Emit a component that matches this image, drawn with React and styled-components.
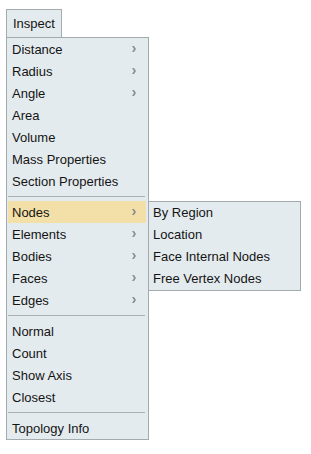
import React from "react"
import styled, { createGlobalStyle } from "styled-components"

const groups = [
  [
    { label: "Distance", sub: true },
    { label: "Radius", sub: true },
    { label: "Angle", sub: true },
    { label: "Area" },
    { label: "Volume" },
    { label: "Mass Properties" },
    { label: "Section Properties" },
  ],
  [
    { label: "Nodes", sub: true, open: true },
    { label: "Elements", sub: true },
    { label: "Bodies", sub: true },
    { label: "Faces", sub: true },
    { label: "Edges", sub: true },
  ],
  [
    { label: "Normal" },
    { label: "Count" },
    { label: "Show Axis" },
    { label: "Closest" },
  ],
  [{ label: "Topology Info" }],
]

const nodeItems = ["By Region", "Location", "Face Internal Nodes", "Free Vertex Nodes"]

export default function App(){
  return(
    <>
    <Global />
    <Page>
      <MenuButton>Inspect</MenuButton>
      <Menu>
        {groups.map((group, gi) => (
          <React.Fragment key={gi}>
            {gi > 0 && <Separator />}
            {group.map(item => (
              <Row key={item.label} $active={item.open}>
                <span>{item.label}</span>
                {item.sub && <Arrow />}
                {item.open && (
                  <SubMenu>
                    {nodeItems.map(s => <SubRow key={s}>{s}</SubRow>)}
                  </SubMenu>
                )}
              </Row>
            ))}
          </React.Fragment>
        ))}
      </Menu>
    </Page>
    </>
  )
}

function Arrow(){
  return(
    <ArrowIcon width="4" height="6" viewBox="0 0 4 6">
      <path d="M0 0 L2 0 L4 3 L2 6 L0 6 L2 3 Z" fill="#8a8f92" />
    </ArrowIcon>
  )
}

const Global = createGlobalStyle`
  body{
    margin: 0;
    background: #ffffff;
    font-family: "Liberation Sans", Arial, sans-serif;
    font-size: 13px;
    color: #141414;
  }
`

const Page = styled.div`
  padding: 9px 0 0 6px;
`

const MenuButton = styled.div`
  box-sizing: border-box;
  width: 56px;
  height: 28px;
  padding-left: 6px;
  line-height: 27px;
  background-color: #e4ebee;
  border: 1px solid #a3abaf;
  border-bottom: none;
`

const Menu = styled.div`
  box-sizing: border-box;
  width: 143px;
  background-color: #e4ebee;
  border: 1px solid #a3abaf;
`

const Row = styled.div`
  position: relative;
  height: 22px;
  margin: 0 2px 0 1px;
  padding: 0 10px 0 4px;
  display: flex;
  align-items: center;
  justify-content: space-between;
  background-color: ${p => p.$active ? "#f3dfa8" : "transparent"};
`

const ArrowIcon = styled.svg`
  display: block;
`

const Separator = styled.div`
  height: 9px;
  display: flex;
  align-items: center;
  margin: 0 3px 0 1px;

  &::after{
    content: "";
    flex: 1;
    height: 1px;
    background-color: #a8b0b4;
  }
`

const SubMenu = styled.div`
  position: absolute;
  left: 140px;
  top: 0;
  box-sizing: border-box;
  width: 153px;
  background-color: #e4ebee;
  border: 1px solid #a3abaf;
`

const SubRow = styled.div`
  height: 22px;
  line-height: 22px;
  padding-left: 4px;
  white-space: nowrap;
`
